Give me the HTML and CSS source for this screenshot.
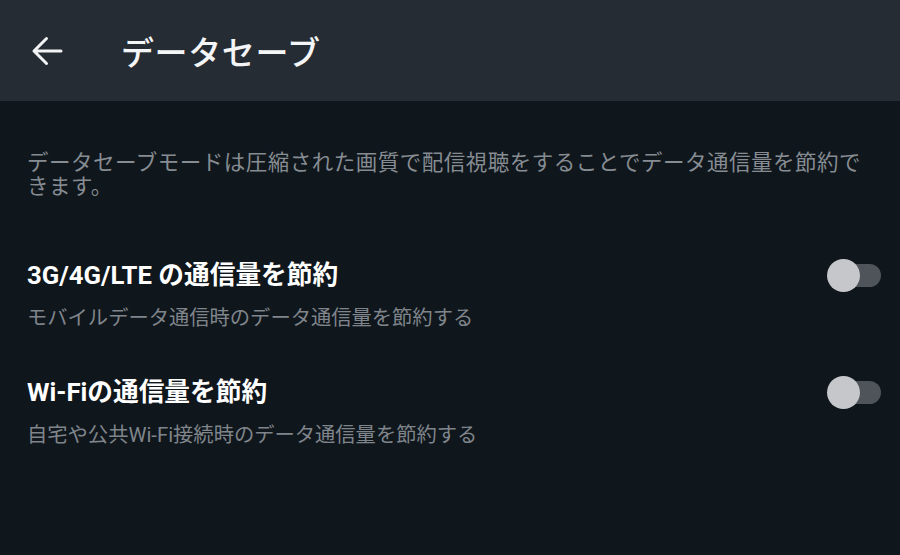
FILE: index.html
```html
<!DOCTYPE html>
<html lang="ja">
<head>
  <meta charset="UTF-8" />
  <meta name="viewport" content="width=device-width, initial-scale=1" />
  <title>データセーブ</title>

  <!-- 画面のスタイル -->
  <link rel="stylesheet" href="styles.css">
</head>
<body>
  <!-- ツールバー -->
  <div id="toolbar">
    <svg class="back" width="32" height="32" viewBox="0 0 32 32">
      <path d="M30 15 H3 M15.5 2.5 L3 15 L15.5 27.5" fill="none" stroke="#f2f3f4" stroke-width="3" stroke-linecap="round" stroke-linejoin="round" />
    </svg>
    <h1>データセーブ</h1>
  </div>

  <!-- 設定内容 -->
  <div id="content">
    <p class="desc">データセーブモードは圧縮された画質で配信視聴をすることでデータ通信量を節約できます。</p>

    <div class="row">
      <div class="texts">
        <div class="title">3G/4G/LTE の通信量を節約</div>
        <div class="sub">モバイルデータ通信時のデータ通信量を節約する</div>
      </div>
      <div class="switch"><span class="track"></span><span class="thumb"></span></div>
    </div>

    <div class="row">
      <div class="texts">
        <div class="title">Wi-Fiの通信量を節約</div>
        <div class="sub">自宅や公共Wi-Fi接続時のデータ通信量を節約する</div>
      </div>
      <div class="switch"><span class="track"></span><span class="thumb"></span></div>
    </div>
  </div>
</body>
</html>
```

FILE: styles.css
```css
/* === 基本 === */
body {
  margin: 0;
  font-family: Roboto, "Noto Sans CJK JP", sans-serif;
  background: #0f161c;
  color: #fff;
  height: 555px;
  overflow: hidden;
}

/* === ツールバー === */
#toolbar {
  height: 101px;
  background: #262c33;
  display: flex;
  align-items: center;
  padding-left: 31px;
  box-sizing: border-box;
}

#toolbar .back {
  display: block;
  margin-top: 2px;
}

#toolbar h1 {
  margin: 0 0 0 58px;
  font-size: 33px;
  font-weight: 500;
  color: #f4f5f6;
  letter-spacing: 0.6px;
}

/* === 内容 === */
#content {
  padding: 0 19px 0 27px;
}

.desc {
  margin: 50px 10px 38px 0;
  font-size: 21.5px;
  line-height: 24px;
  letter-spacing: 0.5px;
  color: #868c92;
}

.row {
  display: flex;
  justify-content: space-between;
  align-items: flex-start;
  padding: 22px 0;
}

.title {
  font-size: 25.7px;
  line-height: 32px;
  font-weight: 700;
  color: #fff;
}

.sub {
  margin-top: 13px;
  font-size: 20.3px;
  line-height: 28px;
  color: #7f858b;
}

/* === スイッチ === */
.switch {
  position: relative;
  width: 54px;
  height: 33px;
}

.switch .track {
  position: absolute;
  right: 0;
  top: 5px;
  width: 46px;
  height: 23px;
  border-radius: 12px;
  background: #4f545b;
}

.switch .thumb {
  position: absolute;
  left: 0;
  top: 0;
  width: 33px;
  height: 33px;
  border-radius: 50%;
  background: #c5c7ca;
}
```
